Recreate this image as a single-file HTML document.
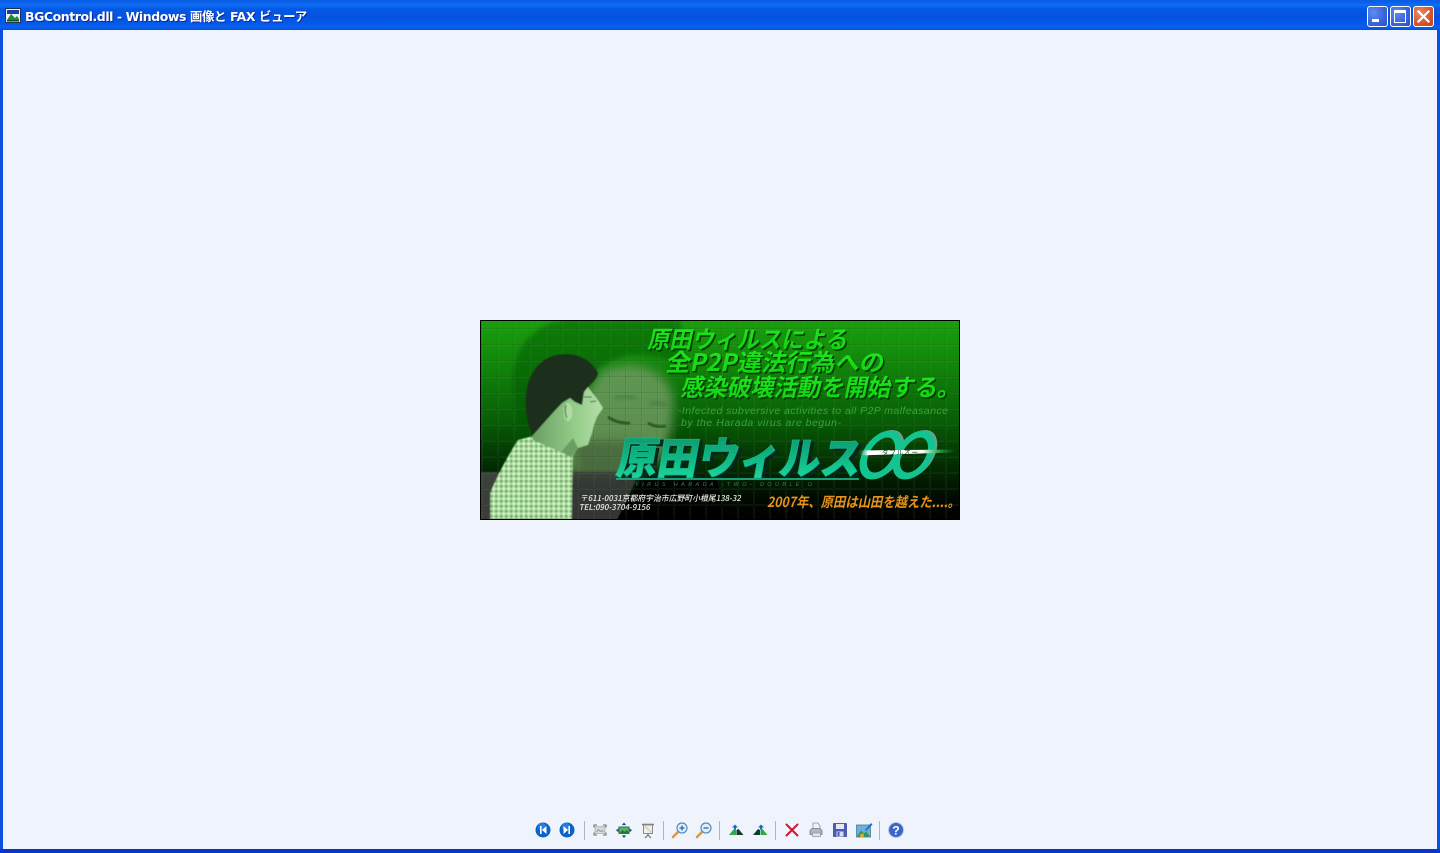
<!DOCTYPE html>
<html lang="ja"><head><meta charset="utf-8"><title>BGControl.dll - Windows 画像と FAX ビューア</title>
<style>
html,body{margin:0;padding:0;width:1440px;height:853px;overflow:hidden;background:#eef3fb}
#win{position:absolute;left:0;top:0;width:1440px;height:853px;background:#eff3fc;overflow:hidden}
#tb{position:absolute;left:0;top:0;width:1440px;height:30px;background:linear-gradient(180deg,#0a5be0 0,#0a62ee 3px,#0f6ff5 5px,#0558e4 9px,#0353e0 18px,#0459ea 24px,#0762f0 27px,#0350d8 30px)}
#title{position:absolute;left:25px;top:8px;font:bold 12.5px/17px "DejaVu Sans","Noto Sans CJK JP",sans-serif;letter-spacing:-.44px;color:#fff;text-shadow:1px 1px 0 #0a2a9a;white-space:nowrap}
.b{position:absolute;width:3px;background:#0a50e0}
#bot{position:absolute;left:0;top:849px;width:1440px;height:4px;background:#0637c4}
.btn{position:absolute;top:6px;width:19px;height:19px;border:1px solid #fff;border-radius:3px;box-sizing:content-box}
.bl{background:radial-gradient(circle at 30% 30%,#5f8cf0 0,#3a66dc 55%,#2a4fcc 100%)}
.rd{background:radial-gradient(circle at 30% 30%,#e88a62 0,#d8532c 60%,#c0401c 100%)}
.sep{position:absolute;top:821px;width:1px;height:19px;background:#aeb6c4}
svg.i{position:absolute;top:821px;width:18px;height:18px;overflow:visible}
#ban{position:absolute;left:480px;top:320px;width:480px;height:200px}
</style></head><body>
<div id="win">
<div id="tb"></div>
<svg style="position:absolute;left:5px;top:8px" width="16" height="16" viewBox="0 0 16 16">
<rect x=".5" y=".5" width="15" height="14" fill="#e8f0f8" stroke="#203050"/><rect x="2" y="2" width="12" height="4" fill="#1b3f9a"/><path d="M2 12L6 6l4 4 2-2 2 3v2H2z" fill="#1f8a3a"/><rect x="2" y="12" width="12" height="1.5" fill="#0d4a20"/>
</svg>
<div id="title">BGControl.dll - Windows 画像と FAX ビューア</div>

<div class="btn bl" style="left:1367px"><div style="position:absolute;left:4px;top:12px;width:7px;height:3px;background:#fff"></div></div>
<div class="btn bl" style="left:1390px"><div style="position:absolute;left:3px;top:3px;width:10px;height:9px;border:1px solid #fff;border-top:3px solid #fff"></div></div>
<div class="btn rd" style="left:1413px"><svg width="19" height="19" viewBox="0 0 19 19" style="position:absolute;left:0;top:0"><path d="M4.5 4.5l10 10M14.5 4.5l-10 10" stroke="#fff" stroke-width="2.2" stroke-linecap="square"/></svg></div>

<div class="b" style="left:0;top:30px;height:820px;background:#0a50e0"></div>
<div class="b" style="left:1437px;top:30px;height:820px;background:#0a50e0"></div>
<div id="bot"></div>

<svg id="ban" viewBox="480 320 480 200" xmlns="http://www.w3.org/2000/svg">
<defs>
<linearGradient id="bg" x1="0" y1="0" x2="0" y2="1">
<stop offset="0" stop-color="#1aa00e"/><stop offset=".25" stop-color="#10820a"/><stop offset=".5" stop-color="#085e06"/><stop offset=".72" stop-color="#022e02"/><stop offset=".9" stop-color="#010801"/><stop offset="1" stop-color="#000"/>
</linearGradient>
<linearGradient id="big" x1="0" y1="0" x2="0" y2="1"><stop offset="0" stop-color="#0b8a62"/><stop offset=".55" stop-color="#10b684"/><stop offset="1" stop-color="#22e4a4"/></linearGradient>
<linearGradient id="head" x1="0" y1="0" x2="0" y2="1"><stop offset="0" stop-color="#22ec22"/><stop offset="1" stop-color="#10d010"/></linearGradient>
<linearGradient id="flare" x1="0" y1="0" x2="1" y2="0"><stop offset="0" stop-color="#0a8a5a" stop-opacity="0"/><stop offset=".1" stop-color="#fff"/><stop offset=".65" stop-color="#fff"/><stop offset=".78" stop-color="#4cc070"/><stop offset="1" stop-color="#0f8a3a" stop-opacity="0"/></linearGradient>
<linearGradient id="neck" x1="0" y1="0" x2="1" y2="0"><stop offset="0" stop-color="#6a9e62"/><stop offset=".6" stop-color="#94cc88"/><stop offset="1" stop-color="#b4e0a8"/></linearGradient>
<pattern id="grid" width="16" height="16" patternUnits="userSpaceOnUse" x="481" y="328"><path d="M0 0H16M0 0V16" stroke="#000" stroke-opacity=".2" stroke-width="1.2" fill="none"/><path d="M1 1H16M1 1V16" stroke="#7be07b" stroke-opacity=".14" stroke-width="1" fill="none"/></pattern>
<pattern id="chk" width="5" height="5" patternUnits="userSpaceOnUse"><rect width="5" height="5" fill="#a8dc9c"/><rect width="2.500" height="2.500" fill="#6ea866"/><rect x="2.500" y="2.500" width="2.500" height="2.500" fill="#d8f4cc"/></pattern>
<filter id="bl1" x="-30%" y="-30%" width="160%" height="160%"><feGaussianBlur stdDeviation="5"/></filter>
<filter id="bl2" x="-10%" y="-10%" width="120%" height="120%"><feGaussianBlur stdDeviation="2"/></filter>
<filter id="bl3"><feGaussianBlur stdDeviation=".5"/></filter>
</defs>
<rect x="480" y="320" width="480" height="200" fill="url(#bg)"/>
<!-- ghost hair and face -->
<path d="M513 392C510 345 535 322 570 320h110l8 60-20-20c-25-10-60-8-78 20-14 25-20 60-30 80l-40-20z" fill="#0a5208" fill-opacity=".45" filter="url(#bl2)"/>
<g filter="url(#bl1)">
<path d="M600 372c30-14 62-6 72 20 4 24-2 52-14 70l-30 14h-58l-10-40z" fill="#6c9a5e" fill-opacity=".85"/>
<path d="M575 440h70l-10 34h-60z" fill="#46663c" fill-opacity=".85"/>
</g>
<path d="M608 417q10 7 22 6M648 423q8 5 18 3" stroke="#2e5a28" stroke-width="3" fill="none" filter="url(#bl3)"/>
<path d="M615 398q12-4 20 0M650 404q10-2 18 2" stroke="#3e6a36" stroke-width="2" fill="none" filter="url(#bl2)"/>
<!-- lower areas -->
<path d="M480 472h30l-20 48h-10z" fill="#4a4a4a" fill-opacity=".8" filter="url(#bl3)"/>
<path d="M565 472h75l-23 48h-52z" fill="#3c3c3c" fill-opacity=".85" filter="url(#bl3)"/>
<path d="M640 480l-23 40h110l-10-40z" fill="#000" fill-opacity=".9"/>
<rect x="480" y="320" width="480" height="200" fill="url(#grid)"/>
<!-- foreground person -->
<g filter="url(#bl3)">
<path d="M518 440L533 436l40 20-1 63h-82v-26c6-15 18-38 28-53z" fill="url(#chk)"/>
<path d="M532 435L562 403 588 387 598 400 603 408 597 417 594 425 592 433 588 445 578 448 572 457 533 440z" fill="url(#neck)"/>
<path d="M578 448l-7 9-10-5 12-14z" fill="#6a9e62"/>
<path d="M532 436C527 420 525 410 526 397 527 375 540 358 557 355 575 352 590 358 598 373 597 379 592 383 588 387L584 392 582 405 575 402 570 398 563 402C550 415 540 428 532 436z" fill="#1a2e1a"/>
<ellipse cx="568" cy="412" rx="4.500" ry="9" fill="#b0dca4"/>
<path d="M566 405q-2 7 1 13" stroke="#5c8c54" stroke-width="1.500" fill="none"/>
<path d="M584 397h8M590 402l6-1" stroke="#3a5c36" stroke-width="1"/>
</g>
<!-- headline -->
<g font-family="'Noto Sans CJK JP','Liberation Sans',sans-serif" font-weight="700">
<g fill="#013a01" transform="translate(1.500 1.500)">
<text transform="translate(647 348) skewX(-12)" font-size="24" textLength="200" lengthAdjust="spacingAndGlyphs">原田ウィルスによる</text>
<text transform="translate(665 371) skewX(-12)" font-size="24" textLength="218" lengthAdjust="spacingAndGlyphs">全P2P違法行為への</text>
<text transform="translate(680 396) skewX(-12)" font-size="24" textLength="280" lengthAdjust="spacingAndGlyphs">感染破壊活動を開始する。</text>
</g>
<g fill="url(#head)">
<text transform="translate(647 348) skewX(-12)" font-size="24" textLength="200" lengthAdjust="spacingAndGlyphs">原田ウィルスによる</text>
<text transform="translate(665 371) skewX(-12)" font-size="24" textLength="218" lengthAdjust="spacingAndGlyphs">全P2P違法行為への</text>
<text transform="translate(680 396) skewX(-12)" font-size="24" textLength="280" lengthAdjust="spacingAndGlyphs">感染破壊活動を開始する。</text>
</g>
</g>
<!-- subtitle -->
<g font-family="'Liberation Sans',sans-serif" font-size="10.500" font-style="italic" fill="#3cb43c" fill-opacity=".85">
<text x="678" y="414" textLength="270" lengthAdjust="spacing">-Infected subversive activities to all P2P malfeasance</text>
<text x="681" y="426" textLength="160" lengthAdjust="spacing">by the Harada virus are begun-</text>
</g>
<!-- big logo -->
<g font-family="'Noto Sans CJK JP','Liberation Sans',sans-serif" font-weight="900">
<text transform="translate(618 476) skewX(-10)" font-size="44" fill="#04261d" stroke="#04261d" stroke-width="1" textLength="244" lengthAdjust="spacingAndGlyphs">原田ウィルス</text>
<text transform="translate(615 474) skewX(-10)" font-size="44" fill="url(#big)" stroke="#12b888" stroke-width=".8" textLength="244" lengthAdjust="spacingAndGlyphs">原田ウィルス</text>
</g>
<g fill="none">
<g transform="translate(881 455) skewX(-20)">
<ellipse cx="2" cy="-1" rx="17" ry="22" stroke="#7c9a90" stroke-width="4"/>
<ellipse cx="0" cy="0" rx="16" ry="21" stroke="#13c490" stroke-width="7"/>
</g>
<g transform="translate(914 455) skewX(-20)">
<ellipse cx="2" cy="-1" rx="17" ry="22" stroke="#7c9a90" stroke-width="4"/>
<ellipse cx="0" cy="0" rx="16" ry="21" stroke="#13c490" stroke-width="7"/>
</g>
</g>
<path d="M858 450.500l98-1-3 3-95 3z" fill="url(#flare)"/>
<text x="882" y="454.500" font-family="'Noto Sans CJK JP',sans-serif" font-size="6.500" fill="#0c3a20" textLength="36">ダブルオー</text>
<rect x="616" y="478" width="243" height="2" fill="#1a9d78"/>
<text x="630" y="486" font-family="'Liberation Sans',sans-serif" font-size="5.500" font-style="italic" fill="#2f7f5f" textLength="182">-VIRUS HARADA -TWO- DOUBLE O</text>
<!-- address -->
<g font-family="'Noto Sans CJK JP','Liberation Sans',sans-serif" font-size="8" fill="#e6efe2" font-weight="500">
<text transform="translate(580 501) skewX(-10)" textLength="161" lengthAdjust="spacingAndGlyphs">〒611-0031京都府宇治市広野町小根尾138-32</text>
<text transform="translate(579 510) skewX(-10)" textLength="71" lengthAdjust="spacingAndGlyphs">TEL:090-3704-9156</text>
</g>
<text transform="translate(767 507) skewX(-12)" font-family="'Noto Sans CJK JP','Liberation Sans',sans-serif" font-size="14" font-weight="700" fill="#e8941c" textLength="193" lengthAdjust="spacingAndGlyphs">2007年、原田は山田を越えた....。</text>
<rect x="480.500" y="320.500" width="479" height="199" fill="none" stroke="#000"/>
</svg>

<!-- toolbar -->
<div class="sep" style="left:584px"></div><div class="sep" style="left:663px"></div><div class="sep" style="left:719px"></div><div class="sep" style="left:775px"></div><div class="sep" style="left:879px"></div>

<svg class="i" style="left:534px" viewBox="0 0 18 18"><circle cx="9" cy="9" r="7.500" fill="#0c62c8"/><circle cx="8" cy="6" r="4" fill="#3c92e8" opacity=".6"/><path d="M6 5h1.600v8H6zM12.500 5v8L8 9z" fill="#fff"/></svg>
<svg class="i" style="left:558px" viewBox="0 0 18 18"><circle cx="9" cy="9" r="7.500" fill="#0c62c8"/><circle cx="8" cy="6" r="4" fill="#3c92e8" opacity=".6"/><path d="M10.400 5H12v8h-1.600zM5.500 5v8L10 9z" fill="#fff"/></svg>

<svg class="i" style="left:591px" viewBox="0 0 18 18"><rect x="4" y="5.500" width="10" height="7" fill="#d4d8d6" stroke="#a8aeac" stroke-width=".7"/><path d="M3 6.500V4h3M15 6.500V4h-3M3 11.500V14h3M15 11.500V14h-3" fill="none" stroke="#6a7270" stroke-width="1.100"/><path d="M5.500 11l2-2.500 2 2 1.500-1 1.500 1.500" stroke="#8a928e" fill="none" stroke-width=".8"/></svg>
<svg class="i" style="left:615px" viewBox="0 0 18 18"><rect x="4" y="6" width="10" height="6.500" fill="#58b458" stroke="#3c6a7c"/><path d="M4.500 12l3-3 2 2 2-2 2.500 3z" fill="#1c7a30"/><path d="M9 1.500l2.200 2.600H6.800zM9 17l2.200-2.600H6.800zM1 9.200l2.400-2v4zM17 9.200l-2.400-2v4z" fill="#0d5c7c"/></svg>
<svg class="i" style="left:639px" viewBox="0 0 18 18"><path d="M3 3.500h12" stroke="#7c7c78" stroke-width="1.600"/><rect x="4.500" y="4" width="9" height="8.500" fill="#f2f0ea" stroke="#8c8c88"/><path d="M5.500 5l7 6.500" stroke="#dad6cc" stroke-width="2"/><path d="M9 12.500v2M9 14l-3 3M9 14l3 3" stroke="#666" stroke-width="1"/></svg>

<svg class="i" style="left:671px" viewBox="0 0 18 18"><path d="M2 16l5.500-5.500" stroke="#d89a4a" stroke-width="2.600" stroke-linecap="round"/><circle cx="11" cy="7" r="5" fill="#e4eefa" stroke="#5a8ab8" stroke-width="1.200"/><path d="M8.500 7h5M11 4.500v5" stroke="#1a6ab8" stroke-width="1.300"/></svg>
<svg class="i" style="left:695px" viewBox="0 0 18 18"><path d="M2 16l5.500-5.500" stroke="#d89a4a" stroke-width="2.600" stroke-linecap="round"/><circle cx="11" cy="7" r="5" fill="#e4eefa" stroke="#5a8ab8" stroke-width="1.200"/><path d="M8.500 7h5" stroke="#1a6ab8" stroke-width="1.300"/></svg>

<svg class="i" style="left:727px" viewBox="0 0 18 18"><path d="M2 14l5-6 2 1v5z" fill="#2fa84a"/><path d="M9.500 9l2-1 5 6H9.500z" fill="#0d3d24"/><path d="M9 3.500l3 3h-2v2H8v-2H6z" transform="translate(-1 0)" fill="#1468c8"/></svg>
<svg class="i" style="left:751px" viewBox="0 0 18 18"><path d="M2 14l5-6 2 1v5z" fill="#0d3d24"/><path d="M9.500 9l2-1 5 6H9.500z" fill="#2fa84a"/><path d="M9 3.500l3 3h-2v2H8v-2H6z" transform="translate(1 0)" fill="#1468c8"/></svg>

<svg class="i" style="left:783px" viewBox="0 0 18 18"><path d="M3.500 3.500l11 11M14.500 3.500l-11 11" stroke="#d01830" stroke-width="2" stroke-linecap="round"/></svg>
<svg class="i" style="left:807px" viewBox="0 0 18 18"><path d="M6 2l5 0 2 3v4H6z" fill="#f0f2f4" stroke="#8c929a" stroke-width=".8"/><path d="M3 9.500l2-2h8l2 2v4H3z" fill="#b0b6be" stroke="#747a84" stroke-width=".8"/><rect x="5.500" y="12" width="8" height="3.500" fill="#e4e6ea" stroke="#8c929a" stroke-width=".7"/></svg>
<svg class="i" style="left:831px" viewBox="0 0 18 18"><path d="M2.500 2.500h13v13h-13z" fill="#4a5cb8" stroke="#3a4a9a" stroke-width=".8"/><rect x="5" y="3" width="8" height="5" fill="#e4e8f4"/><rect x="5.500" y="10.500" width="7" height="5" fill="#d8dce8"/><rect x="6.500" y="11" width="2" height="4" fill="#4a5cb8"/></svg>
<svg class="i" style="left:855px" viewBox="0 0 18 18"><rect x="1.500" y="4" width="14" height="12" fill="#6ab0dc" stroke="#4a7c9c" stroke-width=".8"/><path d="M2 15.500l4-6 3 3 2-2 4 5z" fill="#2f9a3e"/><path d="M10 9l6-7 1.500 1.500L11 10z" fill="#1a70c8"/><circle cx="7" cy="14.500" r="2" fill="#e2a23c"/></svg>

<svg class="i" style="left:887px" viewBox="0 0 18 18"><circle cx="9" cy="9" r="7.500" fill="#3a66c8" stroke="#b8c8e8" stroke-width="1"/><text x="9" y="13.500" text-anchor="middle" font-family="'Liberation Sans',sans-serif" font-weight="700" font-size="12" fill="#fff">?</text></svg>
</div>
</body></html>
